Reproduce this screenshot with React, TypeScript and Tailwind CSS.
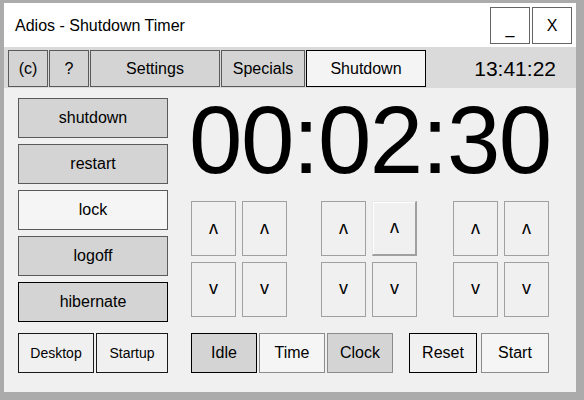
import React from "react";

const font = { fontFamily: '"Liberation Sans", Arial, sans-serif' };

function Arrow({ dir, hover }: { dir: "up" | "down"; hover?: boolean }) {
  return (
    <div
      className={
        "w-[45px] h-[55px] flex items-center justify-center bg-[#f0f0f0] text-[18px] leading-[18px] text-black " +
        (hover
          ? "border-t border-l border-t-[#e8e8e8] border-l-[#e8e8e8] border-r-2 border-b-2 border-r-[#a0a0a0] border-b-[#a0a0a0] shadow-[inset_1px_1px_0_#ffffff]"
          : "border border-[#a0a0a0]")
      }
    >
      {dir === "up" ? (
        <span className="inline-block rotate-180 translate-y-[1px]">v</span>
      ) : (
        <span className="inline-block -translate-y-[2px]">v</span>
      )}
    </div>
  );
}

function ArrowPair({ hoverIndex }: { hoverIndex?: number }) {
  return (
    <div className="grid grid-cols-[45px_45px] gap-[6px]">
      <Arrow dir="up" />
      <Arrow dir="up" hover={hoverIndex === 1} />
      <Arrow dir="down" />
      <Arrow dir="down" />
    </div>
  );
}

export default function App() {
  const leftBtns = [
    { t: "shutdown", c: "bg-[#d4d4d4] border-[#5a5a5a]" },
    { t: "restart", c: "bg-[#d4d4d4] border-[#5a5a5a]" },
    { t: "lock", c: "bg-[#f5f5f5] border-[#5a5a5a]" },
    { t: "logoff", c: "bg-[#d4d4d4] border-[#5a5a5a]" },
    { t: "hibernate", c: "bg-[#d4d4d4] border-black" },
  ];
  return (
    <div style={font} className="w-[584px] h-[400px] bg-[#ababab] pl-[4px] pt-[3px] text-black">
      <div className="w-[572px] h-[389px] flex flex-col bg-[#f0f0f0]">
        {/* Title bar */}
        <div className="h-[44px] bg-white flex items-start pl-[11px] pr-[4px] pt-[4px]">
          <div className="text-[16px] leading-[37px] flex-1">Adios - Shutdown Timer</div>
          <div className="flex gap-[2px]">
            <div className="w-[40px] h-[37px] border border-[#646464] bg-white flex items-center justify-center text-[16px] pt-[6px]">_</div>
            <div className="w-[40px] h-[37px] border border-[#646464] bg-white flex items-center justify-center text-[16px]">X</div>
          </div>
        </div>
        {/* Tab row */}
        <div className="h-[41px] bg-[#dadada] flex items-start pt-[3px] pl-[4px] pr-[20px]">
          <div className="flex gap-px text-[16px]">
            <div className="w-[40px] h-[37px] border border-[#5a5a5a] bg-[#d4d4d4] flex items-center justify-center">(c)</div>
            <div className="w-[40px] h-[37px] border border-[#5a5a5a] bg-[#d4d4d4] flex items-center justify-center">?</div>
            <div className="w-[130px] h-[37px] border border-[#5a5a5a] bg-[#d4d4d4] flex items-center justify-center">Settings</div>
            <div className="w-[84px] h-[37px] border border-[#5a5a5a] bg-[#d4d4d4] flex items-center justify-center">Specials</div>
            <div className="w-[120px] h-[37px] border border-black bg-[#f4f4f4] flex items-center justify-center">Shutdown</div>
          </div>
          <div className="ml-auto h-[37px] flex items-center text-[21px]">13:41:22</div>
        </div>
        {/* Main */}
        <div className="flex-1 flex pl-[14px]">
          <div className="w-[150px] flex flex-col pt-[10px]">
            <div className="flex flex-col gap-[6px]">
              {leftBtns.map((b) => (
                <div key={b.t} className={"h-[40px] border flex items-center justify-center text-[16px] " + b.c}>
                  {b.t}
                </div>
              ))}
            </div>
            <div className="flex gap-[2px] mt-[11px] text-[14px]">
              <div className="w-[76px] h-[40px] border border-[#1a1a1a] bg-[#f0f0f0] flex items-center justify-center">Desktop</div>
              <div className="w-[72px] h-[40px] border border-[#1a1a1a] bg-[#f0f0f0] flex items-center justify-center">Startup</div>
            </div>
          </div>
          <div className="ml-[23px] flex flex-col pt-[4px]">
            <div className="h-[96px] text-[96px] leading-[96px] tracking-[-1.5px] -ml-[2px] whitespace-nowrap">00:02:30</div>
            <div className="mt-[13px] flex">
              <ArrowPair />
              <div className="ml-[34px]">
                <ArrowPair hoverIndex={1} />
              </div>
              <div className="ml-[36px]">
                <ArrowPair />
              </div>
            </div>
            <div className="mt-[16px] flex text-[16px]">
              <div className="flex gap-[2px]">
                <div className="w-[66px] h-[40px] border border-black bg-[#d4d4d4] flex items-center justify-center">Idle</div>
                <div className="w-[66px] h-[40px] border border-[#8c8c8c] bg-[#f5f5f5] flex items-center justify-center">Time</div>
                <div className="w-[66px] h-[40px] border border-[#8c8c8c] bg-[#d4d4d4] flex items-center justify-center">Clock</div>
              </div>
              <div className="flex gap-[4px] ml-[16px]">
                <div className="w-[68px] h-[40px] border border-black bg-[#f0f0f0] flex items-center justify-center">Reset</div>
                <div className="w-[68px] h-[40px] border border-[#8c8c8c] bg-[#f5f5f5] flex items-center justify-center">Start</div>
              </div>
            </div>
          </div>
        </div>
      </div>
    </div>
  );
}
